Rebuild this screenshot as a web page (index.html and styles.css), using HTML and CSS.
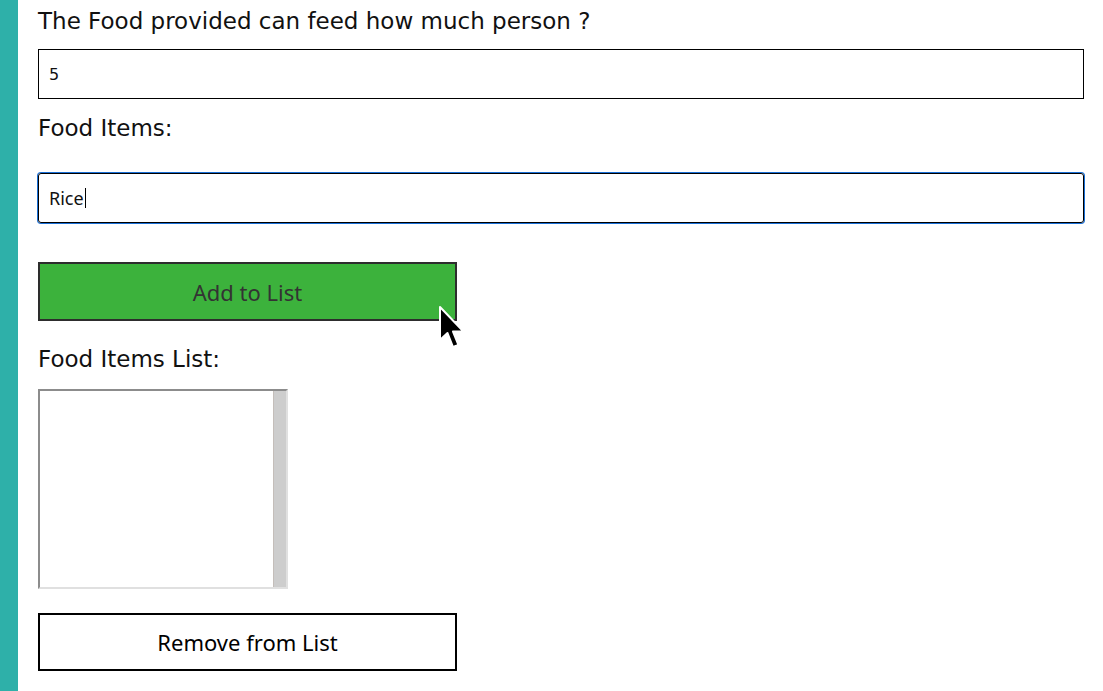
FILE: index.html
```html
<!DOCTYPE html>
<html>
<head>
<meta charset="utf-8">
<link rel="stylesheet" href="styles.css">
</head>
<body>
<div class="page">
  <div class="sidebar"></div>
  <div class="main">
    <label class="label first">The Food provided can feed how much person ?</label>
    <div class="field plain">5</div>
    <label class="label second">Food Items:</label>
    <div class="field focused">Rice<span class="caret"></span></div>
    <div class="btn add">Add to List</div>
    <label class="label third">Food Items List:</label>
    <div class="listbox"><div class="list-area"></div><div class="scroll"></div></div>
    <div class="btn remove">Remove from List</div>
  </div>
</div>
<svg class="cursor" width="30" height="46" viewBox="0 0 30 46">
  <path d="M2 2 L2 35 L9.5 28 L15 42 L20.5 40 L15 26.5 L25.5 26.5 Z" fill="#000" stroke="#fff" stroke-width="2" stroke-linejoin="round"/>
</svg>
</body>
</html>
```
FILE: styles.css
```css
html, body { margin: 0; padding: 0; background: #fff; }
.page { display: flex; min-height: 691px; }
.sidebar { width: 18px; background: #2eb0a9; flex: none; }
.main { flex: 1; padding: 0 19px 0 20px; display: flex; flex-direction: column; align-items: flex-start; font-family: "DejaVu Sans", sans-serif; color: #111; }
.label { font-size: 23px; line-height: 27px; display: block; }
.first { margin-top: 8px; }
.field { box-sizing: border-box; width: 100%; height: 50px; border: 1px solid #000; display: flex; align-items: center; padding-left: 10px; font-size: 16px; }
.plain { margin-top: 14px; font-family: "DejaVu Sans", sans-serif; }
.second { margin-top: 16px; }
.focused { margin-top: 31px; border-radius: 3px; font-family: "Noto Sans", sans-serif; font-size: 18px; box-shadow: 0 0 0 1px #1a6fd6; }
.caret { display: inline-block; width: 1px; height: 20px; background: #000; margin-left: 1px; }
.btn { box-sizing: border-box; width: 419px; display: flex; align-items: center; justify-content: center; font-family: "Noto Sans", sans-serif; font-size: 22px; border: 2px solid #000; }
.add { margin-top: 39px; height: 59px; background: #3cb23c; border-color: #2d2d2d; color: #333; }
.third { margin-top: 25px; }
.listbox { margin-top: 16px; width: 250px; height: 200px; box-sizing: border-box; border-top: 2px solid #8c8c8c; border-left: 2px solid #8c8c8c; border-right: 2px solid #e0e0e0; border-bottom: 2px solid #e0e0e0; display: flex; }
.list-area { flex: 1; background: #fff; }
.scroll { width: 12px; background: #cdcdcd; border-left: 1px solid #c4beba; }
.remove { margin-top: 24px; height: 58px; background: #fff; color: #000; }
.cursor { position: absolute; left: 438px; top: 305px; }
```
